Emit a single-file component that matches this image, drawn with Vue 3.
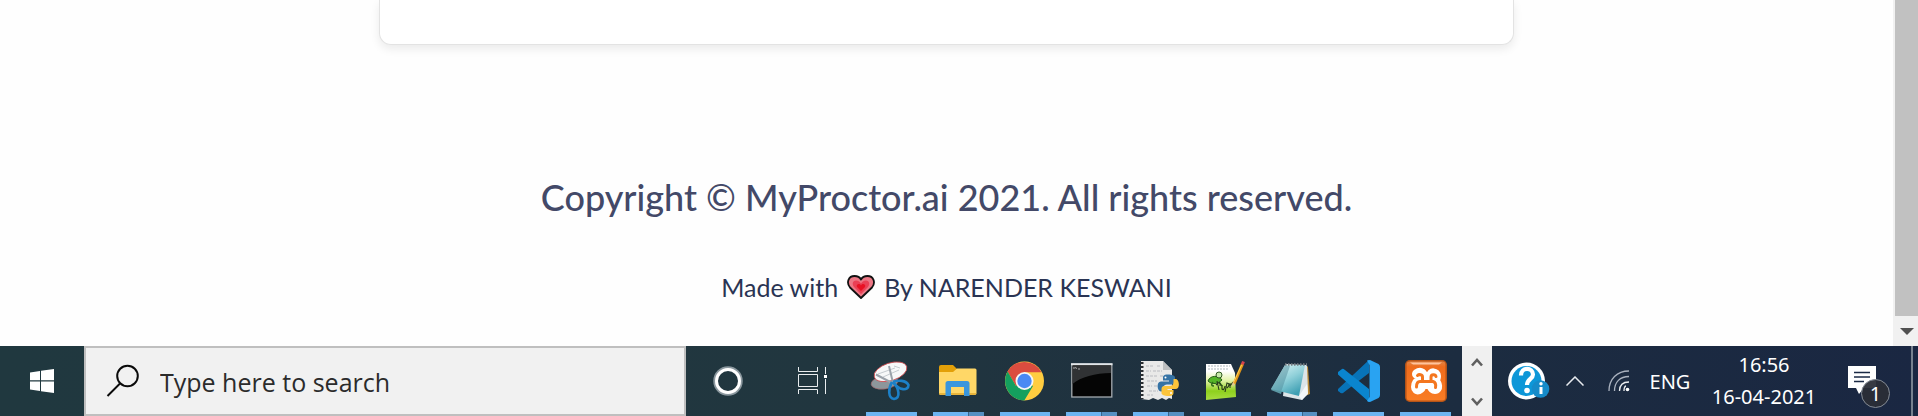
<script setup>
const apps = [
  { id: 'snip', label: 'Snipping Tool', grouped: false },
  { id: 'explorer', label: 'File Explorer', grouped: true },
  { id: 'chrome', label: 'Google Chrome', grouped: false },
  { id: 'terminal', label: 'Command Prompt', grouped: true },
  { id: 'python', label: 'Python IDLE', grouped: true },
  { id: 'npp', label: 'Notepad++', grouped: false },
  { id: 'notepad', label: 'Notepad', grouped: true },
  { id: 'vscode', label: 'Visual Studio Code', grouped: false },
  { id: 'xampp', label: 'XAMPP Control Panel', grouped: false },
]
</script>

<template>
  <div class="screen">
    <div class="viewport">
      <main class="page">
        <section class="card"></section>
        <footer class="footer">
          <h2 class="copyright">Copyright © MyProctor.ai 2021. All rights reserved.</h2>
          <p class="credit">
            <span>Made with</span>
            <svg class="heart" viewBox="0 0 28 24" aria-label="love" role="img">
              <path d="M14 23 L3 12.500 C-1 7.500 1.500 1 7.500 1 C10.500 1 13 2.500 14 4.500 C15 2.500 17.500 1 20.500 1 C26.500 1 29 7.500 25 12.500 Z" fill="#ec7785" stroke="#111" stroke-width="1.800" stroke-linejoin="round" />
              <path d="M14 19 L7 12 C4.500 8.500 6 5.500 9 5.500 C11.500 5.500 13.200 7 14 8.500 C14.800 7 16.500 5.500 19 5.500 C22 5.500 23.500 8.500 21 12 Z" fill="#ea4055" />
              <path d="M14 16 L10 12 C8.500 9.500 12.500 7.500 14 10.500 C15.500 7.500 19.500 9.500 18 12 Z" fill="#e81123" />
            </svg>
            <span>By NARENDER KESWANI</span>
          </p>
        </footer>
      </main>
      <div class="scrollbar">
        <div class="thumb"></div>
        <button class="scroll-down" aria-label="Scroll down">
          <svg width="14" height="7" viewBox="0 0 14 7"><path d="M0 0H14L7 7Z" fill="#505050" /></svg>
        </button>
      </div>
    </div>

    <div class="taskbar">
      <button class="start" aria-label="Start">
        <svg width="24" height="24" viewBox="0 0 24 24" fill="#fff">
          <path d="M0 3.400 L10 2 V11.300 H0Z M11 1.800 L24 0 V11.300 H11Z M0 12.500 H10 V22 L0 20.600Z M11 12.500 H24 V24 L11 22.200Z" />
        </svg>
      </button>
      <label class="search">
        <svg width="34" height="34" viewBox="0 0 34 34" fill="none" stroke="#0a0a0a" stroke-width="2">
          <circle cx="21.500" cy="12" r="10.300" /><path d="M14 19.500 L1.500 32" />
        </svg>
        <input type="text" placeholder="Type here to search" aria-label="Type here to search" />
      </label>
      <button class="tool" aria-label="Cortana">
        <svg width="30" height="30" viewBox="0 0 30 30" fill="none">
          <circle cx="15" cy="15" r="13.500" stroke="#8a979e" stroke-width="2.500" />
          <circle cx="15" cy="15" r="11.500" stroke="#fff" stroke-width="3" />
        </svg>
      </button>
      <button class="tool" aria-label="Task View">
        <svg width="30" height="28" viewBox="0 0 30 28" fill="none" stroke="#e9edef" stroke-width="1">
          <path d="M1.500 0V4.500H20.500V0 M1.500 7.500H20.500V19.500H1.500Z M1.500 27V22.500H20.500V27 M28.500 0V7 M28.500 12V27" />
          <rect x="27" y="8" width="3" height="3" fill="#fff" stroke="none" />
        </svg>
      </button>

      <nav class="apps">
        <button v-for="app in apps" :key="app.id" class="app" :class="{ grouped: app.grouped }" :aria-label="app.label">
          <svg v-if="app.id === 'snip'" viewBox="0 0 42 42">
            <ellipse cx="14.500" cy="22.500" rx="13.500" ry="6.500" transform="rotate(-8 14.500 22.500)" fill="#8d969b" stroke="#a35c60" stroke-width=".6" />
            <ellipse cx="20.500" cy="11.800" rx="17" ry="8.800" transform="rotate(-18 20.500 11.800)" fill="#f7f8f9" stroke="#cf4a4d" stroke-width=".8" />
            <path d="M8 14l17-6 M13 17l16-7 M24 6l6 2" stroke="#c5cbd0" stroke-width="1" />
            <path d="M6 14.500L24 24 M19 6L23 23" stroke="#9ba2aa" stroke-width="2" />
            <g fill="none" stroke="#1c80c8" stroke-width="2.600"><path d="M22 22C18 29 18 38 24 39C31 38 29 28 23 22" /><path d="M23 22C28 20 36 20 38.500 25C38.500 31 29 31 23 22" /></g>
          </svg>
          <svg v-else-if="app.id === 'explorer'" viewBox="0 0 42 42">
            <path d="M2 7q0-2 2-2h12l4 4v8H2Z" fill="#e3a008" />
            <path d="M2 12h14l4-3.500h18q1.500 0 1.500 1.500v23q0 2-2 2H3.500Q2 35 2 33Z" fill="#ffd767" />
            <path d="M2 33q0 2 1.500 2h34q2 0 2-2Z" fill="#e8b43b" />
            <path d="M8.500 36V23.500q0-2.500 2.500-2.500h19q2.500 0 2.500 2.500V36H27v-9H14v9Z" fill="#3a96dd" />
          </svg>
          <svg v-else-if="app.id === 'chrome'" viewBox="0 0 42 42">
            <circle cx="20.500" cy="21" r="19.500" fill="#ffcd40" />
            <path d="M20.500 21L12 26L3.500 11.500A19.500 19.500 0 0 1 37.500 12.200H20.500Z" fill="#db4c3f" />
            <path d="M3.600 11.500A19.500 19.500 0 0 0 20.300 40.500L29 26L20.500 21L12 26Z" fill="#14a05e" />
            <circle cx="20.500" cy="21" r="9" fill="#f5f5f5" /><circle cx="20.500" cy="21" r="7.200" fill="#4a89f3" />
          </svg>
          <svg v-else-if="app.id === 'terminal'" viewBox="0 0 42 42">
            <rect x=".8" y="4" width="40" height="33" fill="#050505" stroke="#a5abb0" stroke-width="1.300" />
            <path d="M1.500 6H40V13C24 13 10 17 1.500 24Z" fill="#303234" /><path d="M0 4.300H41.500" stroke="#e1e5e8" stroke-width="2" />
            <path d="M3 7v2 M4.500 7l1 2 M7 9h2" stroke="#ccc" stroke-width=".8" />
          </svg>
          <svg v-else-if="app.id === 'python'" viewBox="0 0 42 42">
            <path d="M4 1H26L35 10V39L32 38L29 40L25 38L21 40L16 38L12 40L4 39Z" fill="#e9e9e8" />
            <path d="M26 1V10H35Z" fill="#bdbfc0" />
            <path d="M9 6h8m3 0h4 M9 11h5m2 0h9 M9 16h12m2 0h4 M10 21h10 M10 26h5m2 0h4 M12 31h9 M10 35h6" stroke="#b9bcbf" stroke-width="1.200" stroke-dasharray="3 1" />
            <path d="M5 2V39" stroke="#292d30" stroke-width="3" stroke-dasharray="2 2" />
            <path d="M31 14.500c-5 0-5 2-5 4v2h6v1h-8c-5 0-4 10 0 10h2v-3c0-3 2-4 4-4h5c2 0 3-1 3-3v-4c0-2-3-3-7-3Z" fill="#3673a5" />
            <path d="M31.500 36c5 0 5-2 5-4v-2h-6v-1h8c5 0 4-10 0-10h-2v3c0 3-2 4-4 4h-5c-2 0-3 1-3 3v4c0 2 3 3 7 3Z" fill="#fbc43b" />
            <circle cx="28.500" cy="17.500" r="1" fill="#fff" /><circle cx="34" cy="33" r="1" fill="#fff" />
          </svg>
          <svg v-else-if="app.id === 'npp'" viewBox="0 0 42 42">
            <defs><linearGradient id="nppPage" x2="0" y2="1"><stop offset=".2" stop-color="#fff" /><stop offset=".45" stop-color="#e5f4ab" /><stop offset=".75" stop-color="#8ed01d" /><stop offset="1" stop-color="#a9dd42" /></linearGradient></defs>
            <path d="M2 4H27L31 13L32 37L2 40Z" fill="url(#nppPage)" />
            <path d="M4 6H26 M4 9H25" stroke="#aeb7bb" stroke-width="1" stroke-dasharray="2 1" />
            <path d="M4 21C6 15 15 15 18 20C14 24 8 25 4 21Z" fill="#55b527" stroke="#29601b" stroke-width="1" />
            <circle cx="15" cy="15" r="3" fill="#c6e9a8" stroke="#315a22" /><path d="M9 22q-3 4 1 4 M15 22l3 4" fill="none" stroke="#2f7018" stroke-width="1.500" />
            <path d="M13 21L15 30 M12 25q5-5 4 1 M18 25v4q2 2 3-3 M21 32L23 23q4 1 0 5 M26 23v5 M29 22l-3 4" fill="none" stroke="#26371b" stroke-width="1.100" />
            <path d="M38.500 4L30 24" stroke="#e09517" stroke-width="3" /><path d="M37.500 5L29.500 23" stroke="#ffcf52" stroke-width="1" />
            <path d="M39.500 1.500L38.300 4.500" stroke="#d5434f" stroke-width="3" /><path d="M28.700 22L28 27L31 24Z" fill="#e3c594" />
          </svg>
          <svg v-else-if="app.id === 'notepad'" viewBox="0 0 42 42">
            <defs><linearGradient id="noteCover" x2=".6" y2="1"><stop stop-color="#e6fafa" /><stop offset=".55" stop-color="#8fd0d9" /><stop offset="1" stop-color="#3e9fb3" /></linearGradient></defs>
            <path d="M35 5L37 7L39 34L34 36Z" fill="#b98a35" />
            <path d="M15 4L36 5L37 33L31 40L12 36Z" fill="#dce5e8" />
            <path d="M14 5L0 30L10 34L18 6Z" fill="#5c98a4" />
            <path d="M14 5H34L28 36L0 29Z" fill="url(#noteCover)" />
            <path d="M14 5L19 6L10 32L0 29Z" fill="#4b8694" opacity=".45" />
            <path d="M28 36L36 24L37 34L31 40Z" fill="#f5f8f8" />
            <path d="M14 4.500H36" stroke="#737b80" stroke-width="2.500" stroke-dasharray="1.500 1.500" />
          </svg>
          <svg v-else-if="app.id === 'vscode'" viewBox="0 0 42 42">
            <path d="M0 29L31 0V13L5 33Q3 34 1.500 32L0 31Z" fill="#0873b8" />
            <path d="M0 12L4 9Q5 8 7 10L31 29V42L0 14.500Z" fill="#0a85cf" />
            <path d="M29 .5Q30 0 32 0L40.500 4Q42 5 42 7V35Q42 37 40.500 38L32 42Q30 42 29 41L31.500 37V5Z" fill="#29a3f2" />
          </svg>
          <svg v-else viewBox="0 0 42 42">
            <defs><linearGradient id="xamppTile" x2="0" y2="1"><stop stop-color="#df874b" /><stop offset=".15" stop-color="#ef6c1c" /><stop offset="1" stop-color="#f97d25" /></linearGradient></defs>
            <rect x=".8" y=".8" width="40.400" height="40.400" rx="4" fill="url(#xamppTile)" stroke="#b75417" stroke-width="1.500" />
            <path d="M5 2.500H37L34 4.500H8Z" fill="#ffc39c" />
            <g fill="none" stroke-linecap="round" stroke-linejoin="round">
              <path d="M12 14C16 11 18 14 18 17V20H26V16C26 12 31 13 31 16C31 19 29 21 29 21C33 24 33 29 30 29C27 29 27 27 26 24H17C16 30 11 31 11 27C11 24 12 22 15 21" stroke="#fff" stroke-width="10" />
              <path d="M12.500 15.500C14 14 17.500 14.500 17.500 17V21.500H26V17C26 14 30.500 14 31 16.500 M17.500 21.500H15C12 21.500 11.500 24 11.500 27 M26 21.500H28C31 22.500 31 25 30.500 27.500" stroke="#f4761f" stroke-width="3" />
            </g>
          </svg>
        </button>
      </nav>

      <div class="scrollers">
        <button aria-label="Previous row"><svg width="12" height="9" viewBox="0 0 12 9"><path d="M1 7.500L6 2L11 7.500" fill="none" stroke="#606060" stroke-width="2.600" /></svg></button>
        <button aria-label="Next row"><svg width="12" height="9" viewBox="0 0 12 9"><path d="M1 1.500L6 7L11 1.500" fill="none" stroke="#606060" stroke-width="2.600" /></svg></button>
      </div>

      <div class="tray">
        <button class="help" aria-label="Help">
          <svg width="42" height="38" viewBox="0 0 42 38">
            <circle cx="18.500" cy="19" r="18.500" fill="#fff" /><circle cx="18.500" cy="19" r="15" fill="#0d97d8" />
            <path d="M13 13.500C13 4.500 25 5 25 12.500C25 17 19 17 19 23" fill="none" stroke="#fff" stroke-width="4.200" /><circle cx="19" cy="28.500" r="2.800" fill="#fff" />
            <circle cx="32.500" cy="27" r="8.800" fill="#168bc9" /><path d="M33 25V32" fill="none" stroke="#fff" stroke-width="3" /><circle cx="33" cy="21.800" r="1.700" fill="#fff" />
          </svg>
        </button>
        <button class="chevron" aria-label="Show hidden icons"><svg width="18" height="10" viewBox="0 0 18 10"><path d="M.5 9.500L9 1L17.500 9.500" fill="none" stroke="#e8ebef" stroke-width="1.500" /></svg></button>
        <button class="wifi" aria-label="Network">
          <svg width="22" height="22" viewBox="0 0 22 22" fill="none" stroke-width="1.300">
            <path d="M1 21C1 9 9 1 21 1 M6.500 21C6.500 12 12 6.500 21 6.500" stroke="#aab2bf" /><path d="M11.500 21C11.500 15 15 12 21 12 M16 21Q16 16.500 18 16" stroke="#e9ecef" /><circle cx="19.500" cy="19.500" r="1.800" fill="#fff" />
          </svg>
        </button>
        <button class="lang">ENG</button>
        <button class="clock"><time>16:56</time><time>16-04-2021</time></button>
        <button class="notices" aria-label="1 new notification">
          <svg width="28" height="28" viewBox="0 0 28 28"><path d="M0 0H28V22H16L11 28L8 22H0Z" fill="#fff" /><path d="M6 6.500H22 M6 11H22 M6 15.500H16" stroke="#1b2a45" stroke-width="1.500" /></svg>
          <span class="badge">1</span>
        </button>
        <button class="desktop" aria-label="Show desktop"></button>
      </div>
    </div>
  </div>
</template>

<style>
body { margin: 0; }
</style>

<style scoped>
.screen { display: flex; flex-direction: column; min-height: 100vh; background: #fff; font-family: "Noto Sans", "Open Sans", sans-serif; }
button { display: flex; align-items: center; justify-content: center; padding: 0; border: 0; background: none; color: #fff; font: inherit; }
svg { display: block; flex: none; }
.viewport { display: flex; flex: 1; }
.page { flex: 1; display: flex; flex-direction: column; align-items: center; background: #fefefe; }
.card { box-sizing: border-box; width: 60%; height: 45px; border: 1px solid #e3e3e3; border-top: 0; border-radius: 0 0 12px 12px; background: #fff; box-shadow: 0 4px 10px rgba(0, 0, 0, .08); }
.footer { display: flex; flex-direction: column; align-items: center; padding-top: 128px; font-family: Lato, sans-serif; }
.copyright { margin: 0; font-size: 36px; line-height: 48px; font-weight: 500; color: #434968; }
.credit { display: flex; align-items: center; gap: 9px; margin: 50px 0 0; font-size: 25px; line-height: 32px; font-weight: 400; color: #2a3453; }
.heart { width: 28px; height: 24px; }
.scrollbar { display: flex; flex-direction: column; width: 25px; background: #f1f1f1; }
.thumb { flex: 1; margin-left: 2px; background: #c1c1c1; }
.scroll-down { height: 30px; padding-left: 3px; }
.taskbar { display: flex; height: 70px; background: linear-gradient(90deg, #20383f 0%, #21363f 45%, #1c2c40 76%, #1a2742 100%); }
.start { width: 84px; }
.search { box-sizing: border-box; display: flex; align-items: center; flex: 0 1 602px; min-width: 0; gap: 20px; padding-left: 20px; border: 2px solid #bfbfbf; background: #f1f1f1; }
.search input { flex: 1; min-width: 0; height: 40px; padding: 2px 0 0; border: 0; outline: 0; background: none; color: #2b2b2b; font: 25px "Open Sans", sans-serif; }
.search input::placeholder { color: #2b2b2b; opacity: 1; }
.tool { width: 84px; }
.apps { display: grid; grid-template-columns: repeat(9, 1fr); width: 601px; margin-left: 4px; }
.app { position: relative; }
.app svg { width: 42px; height: 42px; }
.app::after { content: ""; position: absolute; left: 8px; right: 8px; bottom: 0; height: 4px; background: #6cb4f1; }
.app.grouped::after { background: linear-gradient(90deg, #6cb4f1 35px, #39658a 35px, #39658a 36px, #5590c2 36px); }
.scrollers { box-sizing: border-box; display: flex; flex-direction: column; justify-content: space-between; width: 30px; padding: 12px 0 10px; margin-left: auto; background: #f0f0f0; }
.tray { display: flex; align-items: center; width: 426px; font-size: 20px; }
.help { margin-left: 16px; }
.chevron { margin-left: 16px; }
.wifi { margin-left: 24px; }
.lang { width: 60px; margin-left: 10px; }
.clock { flex: 1; flex-direction: column; padding-right: 20px; line-height: 32px; }
.notices { position: relative; width: 42px; height: 42px; align-items: flex-start; justify-content: flex-start; margin: 12px 21px 0 0; }
.badge { position: absolute; right: 0; bottom: 0; box-sizing: border-box; width: 29px; height: 29px; border: 1px solid #858c96; border-radius: 50%; background: rgba(42, 46, 54, .94); text-align: center; line-height: 27px; }
.desktop { box-sizing: border-box; width: 7px; height: 100%; border-left: 2px solid #77818f; }
</style>
